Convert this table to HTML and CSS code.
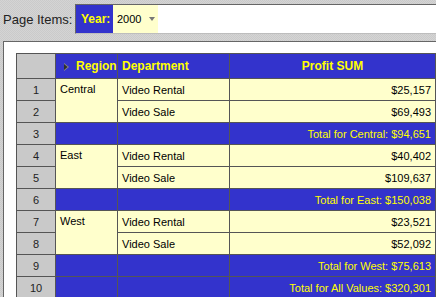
FILE: index.html
```html
<!DOCTYPE html>
<html lang="en">
<head>
    <meta charset="UTF-8">
    <title>Profit by Region</title>
    <link rel="stylesheet" href="styles.css">
</head>
<body>
    <div class="page-items">
        <span class="page-items-label">Page Items:</span>
        <div class="page-items-box">
            <span class="item-name">Year:</span>
            <span class="item-value">2000<span class="drop-arrow"></span></span>
        </div>
    </div>

    <div class="report">
        <table class="crosstab">
            <colgroup>
                <col class="c-num">
                <col class="c-region">
                <col class="c-dept">
                <col class="c-profit">
            </colgroup>
            <tr class="head">
                <th class="rownum"></th>
                <th class="region">
                    <svg class="sort-arrow" width="5" height="8" viewBox="0 0 5 8">
                        <path d="M0 0 L5 4 L0 8 Z" fill="#8a8a8a"/>
                        <path d="M0 1 L3.6 4 L0 7 Z" fill="#2e2e2e"/>
                    </svg>Region
                </th>
                <th>Department</th>
                <th class="profit">Profit SUM</th>
            </tr>
            <tr>
                <td class="rownum">1</td>
                <td class="region" rowspan="2">Central</td>
                <td>Video Rental</td>
                <td class="amount">$25,157</td>
            </tr>
            <tr>
                <td class="rownum">2</td>
                <td>Video Sale</td>
                <td class="amount">$69,493</td>
            </tr>
            <tr class="total">
                <td class="rownum">3</td>
                <td></td>
                <td></td>
                <td class="amount">Total for Central: $94,651</td>
            </tr>
            <tr>
                <td class="rownum">4</td>
                <td class="region" rowspan="2">East</td>
                <td>Video Rental</td>
                <td class="amount">$40,402</td>
            </tr>
            <tr>
                <td class="rownum">5</td>
                <td>Video Sale</td>
                <td class="amount">$109,637</td>
            </tr>
            <tr class="total">
                <td class="rownum">6</td>
                <td></td>
                <td></td>
                <td class="amount">Total for East: $150,038</td>
            </tr>
            <tr>
                <td class="rownum">7</td>
                <td class="region" rowspan="2">West</td>
                <td>Video Rental</td>
                <td class="amount">$23,521</td>
            </tr>
            <tr>
                <td class="rownum">8</td>
                <td>Video Sale</td>
                <td class="amount">$52,092</td>
            </tr>
            <tr class="total">
                <td class="rownum">9</td>
                <td></td>
                <td></td>
                <td class="amount">Total for West: $75,613</td>
            </tr>
            <tr class="total">
                <td class="rownum">10</td>
                <td></td>
                <td></td>
                <td class="amount">Total for All Values: $320,301</td>
            </tr>
        </table>
    </div>
</body>
</html>
```

FILE: styles.css
```css
body {
    margin: 0;
    width: 436px;
    height: 297px;
    overflow: hidden;
    font-family: "Liberation Sans", Arial, sans-serif;
    background: repeating-conic-gradient(#d4d4d4 0 25%, #cacaca 0 50%) 0 0 / 2px 2px;
}

/* page items bar */
.page-items {
    display: flex;
    align-items: center;
    padding-top: 4px;
    height: 30px;
}
.page-items-label {
    width: 72px;
    margin-left: 3px;
    font-size: 13px;
    color: #222;
}
.page-items-box {
    flex: 1;
    display: flex;
    height: 28px;
    border: 1px solid #666;
    border-bottom-color: #bdbdbd;
    border-right: none;
    background: white;
}
.item-name {
    display: flex;
    align-items: center;
    width: 37px;
    padding-left: 5px;
    box-sizing: border-box;
    background: #3333cc;
    color: #ffff00;
    font-weight: bold;
    font-size: 12px;
}
.item-value {
    display: flex;
    align-items: center;
    width: 45px;
    padding-left: 4px;
    box-sizing: border-box;
    background: #ffffcc;
    font-size: 11px;
    color: #000;
}
.drop-arrow {
    margin-left: 8px;
    border-left: 3px solid transparent;
    border-right: 3px solid transparent;
    border-top: 4px solid #777;
}

/* report panel */
.report {
    margin: 7px 0 0 3px;
    padding: 11px 0 0 12px;
    height: 300px;
    border-top: 1px solid #666;
    border-left: 1px solid #666;
    background: white;
}
.crosstab {
    border-collapse: collapse;
    table-layout: fixed;
    width: 419px;
    font-size: 11px;
}
.c-num { width: 39px; }
.c-region { width: 62px; }
.c-dept { width: 112px; }
.c-profit { width: 206px; }

.crosstab th, .crosstab td {
    border: 1px solid #555;
    padding: 0 4px;
    text-align: left;
    white-space: nowrap;
    overflow: hidden;
}
.crosstab tr { height: 22px; }
.crosstab tr.head { height: 25px; }
.crosstab td {
    background: #ffffcc;
    color: #000;
}
.crosstab th {
    background: #3333cc;
    color: #ffff00;
    font-size: 12px;
    font-weight: bold;
}
.crosstab th.profit { text-align: center; }
.crosstab th.region { padding-left: 8px; }
.sort-arrow {
    margin-right: 7px;
    vertical-align: -1px;
}

.crosstab .rownum {
    text-align: center;
    color: #222;
    background: repeating-conic-gradient(#cfcfcf 0 25%, #c2c2c2 0 50%) 0 0 / 2px 2px;
}
.crosstab td.region { vertical-align: top; padding-top: 4px; }
.crosstab td.amount { text-align: right; }
.crosstab tr.total td:not(.rownum) {
    background: #3333cc;
    color: #ffff00;
}
```
